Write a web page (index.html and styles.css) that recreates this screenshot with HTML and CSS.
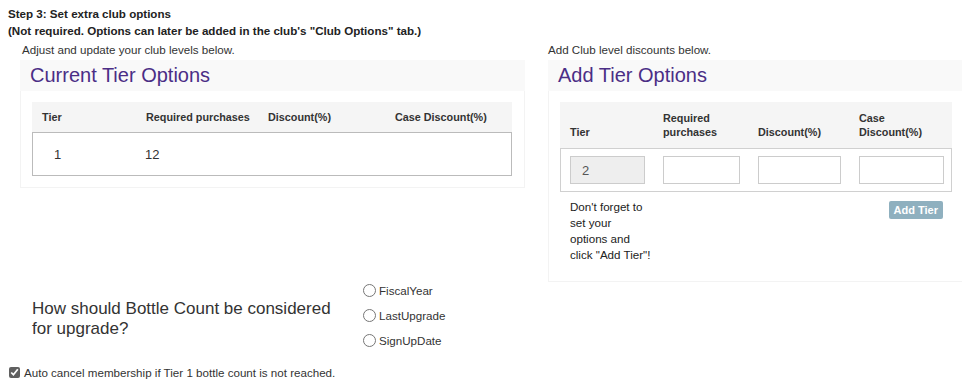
FILE: index.html
```html
<!DOCTYPE html>
<html lang="en">

<head>
    <meta charset="UTF-8">
    <meta name="viewport" content="width=device-width, initial-scale=1.0">
    <title>Club Options</title>
    <link rel="stylesheet" href="styles.css">
</head>

<body>
    <div class="step-title">
        <div>Step 3: Set extra club options</div>
        <div>(Not required. Options can later be added in the club's "Club Options" tab.)</div>
    </div>

    <div class="columns">
        <!-- Current tiers -->
        <div class="col col-left">
            <div class="col-label">Adjust and update your club levels below.</div>
            <div class="panel">
                <div class="panel-heading">Current Tier Options</div>
                <div class="panel-body">
                    <div class="tier-table current">
                        <div class="tier-head">
                            <div>Tier</div>
                            <div>Required purchases</div>
                            <div>Discount(%)</div>
                            <div>Case Discount(%)</div>
                        </div>
                        <div class="tier-row">
                            <div class="val-tier">1</div>
                            <div class="val-req">12</div>
                            <div></div>
                            <div></div>
                        </div>
                    </div>
                </div>
            </div>
        </div>

        <!-- Add tier -->
        <div class="col col-right">
            <div class="col-label">Add Club level discounts below.</div>
            <div class="panel">
                <div class="panel-heading">Add Tier Options</div>
                <div class="panel-body tall">
                    <div class="tier-table add">
                        <div class="tier-head">
                            <div>Tier</div>
                            <div>Required<br>purchases</div>
                            <div>Discount(%)</div>
                            <div>Case<br>Discount(%)</div>
                        </div>
                        <div class="tier-row">
                            <div><input type="text" value="2" readonly class="readonly"></div>
                            <div><input type="text"></div>
                            <div><input type="text"></div>
                            <div><input type="text"></div>
                        </div>
                    </div>
                    <div class="add-footer">
                        <p class="note">Don't forget to<br>set your<br>options and<br>click "Add Tier"!</p>
                        <button type="button" class="btn-add">Add Tier</button>
                    </div>
                </div>
            </div>
        </div>
    </div>

    <div class="upgrade">
        <div class="upgrade-question">How should Bottle Count be considered for upgrade?</div>
        <div class="upgrade-options">
            <label><input type="radio" name="countFrom" value="FiscalYear"> FiscalYear</label>
            <label><input type="radio" name="countFrom" value="LastUpgrade"> LastUpgrade</label>
            <label><input type="radio" name="countFrom" value="SignUpDate"> SignUpDate</label>
        </div>
    </div>

    <label class="auto-cancel"><input type="checkbox" checked> Auto cancel membership if Tier 1 bottle count is not reached.</label>
</body>

</html>
```

FILE: styles.css
```css
body {
    font-family: "Liberation Sans", Arial, sans-serif;
    font-size: 11.6px;
    color: #333;
    margin: 0;
    background: #fff;
}

.step-title {
    padding: 5px 0 0 8px;
    font-weight: bold;
    line-height: 17px;
    color: #222;
}

.columns {
    display: flex;
    gap: 23px;
    padding-left: 20px;
    margin-top: 4px;
}

.col-left {
    width: 505px;
}

.col-right {
    flex: 1;
}

.col-label {
    line-height: 14px;
    margin-bottom: 3px;
}

.col-left .col-label {
    padding-left: 2px;
}

.panel-heading {
    background: #f9f9f9;
    height: 31px;
    line-height: 31px;
    padding-left: 10px;
    font-size: 20px;
    color: #4b2e86;
}

.panel-body {
    border: 1px solid #f3f3f3;
    border-top: none;
    padding: 11px 12px 11px 11px;
}

.panel-body.tall {
    padding-bottom: 18px;
}

/* tier tables */
.tier-head,
.tier-row {
    display: grid;
}

.current .tier-head,
.current .tier-row {
    grid-template-columns: 104px 122px 127px 127px;
}

.add .tier-head,
.add .tier-row {
    grid-template-columns: 93px 95px 101px 103px;
}

.tier-table {
    width: 480px;
}

.tier-table.add {
    width: 392px;
}

.tier-head {
    background: #f5f5f5;
    font-size: 10.8px;
    font-weight: bold;
    color: #333;
}

.current .tier-head {
    height: 30px;
    align-items: center;
}

.current .tier-head div {
    padding-left: 10px;
}

.add .tier-head {
    height: 46px;
    align-items: end;
    line-height: 14px;
}

.add .tier-head div {
    padding: 0 0 9px 10px;
}

.tier-row {
    height: 44px;
    align-items: center;
    border: 1px solid #bbb;
    box-sizing: border-box;
}

.add .tier-row {
    border-color: #d0d0d0;
}

.val-tier {
    padding-left: 21px;
    font-size: 13px;
}

.val-req {
    padding-left: 8px;
    font-size: 13px;
}

.add .tier-row div {
    padding: 0 9px 0 9px;
}

.add .tier-row input {
    width: 100%;
    height: 28px;
    box-sizing: border-box;
    border: 1px solid #ccc;
    padding: 0 11px;
    font-family: inherit;
    font-size: 13px;
    color: #555;
    background: #fff;
}

.add .tier-row input.readonly {
    background: #eee;
}

.add-footer {
    display: flex;
    justify-content: space-between;
    align-items: flex-start;
    padding: 7px 9px 0 10px;
}

.note {
    margin: 0;
    line-height: 16px;
    color: #222;
    white-space: nowrap;
}

.btn-add {
    margin-top: 2px;
    background: #8fb0bf;
    color: #fff;
    border: none;
    border-radius: 2px;
    height: 18px;
    padding: 0 5px;
    font-family: inherit;
    font-size: 11px;
    font-weight: bold;
}

/* upgrade question */
.upgrade {
    display: flex;
    align-items: center;
    margin-top: -4px;
}

.upgrade-question {
    width: 310px;
    padding: 0 20px 0 32px;
    font-size: 17px;
    line-height: 20px;
    color: #333;
    margin-top: 7px;
}

.upgrade-options label {
    display: flex;
    align-items: center;
    height: 25px;
    color: #333;
}

.upgrade-options input {
    margin: 0 3px 0 1px;
    width: 13px;
    height: 13px;
}

.auto-cancel {
    display: flex;
    align-items: center;
    margin-top: 13px;
    padding-left: 9px;
}

.auto-cancel input {
    margin: 0 4px 0 0;
    width: 11px;
    height: 11px;
    accent-color: #606060;
}
```
